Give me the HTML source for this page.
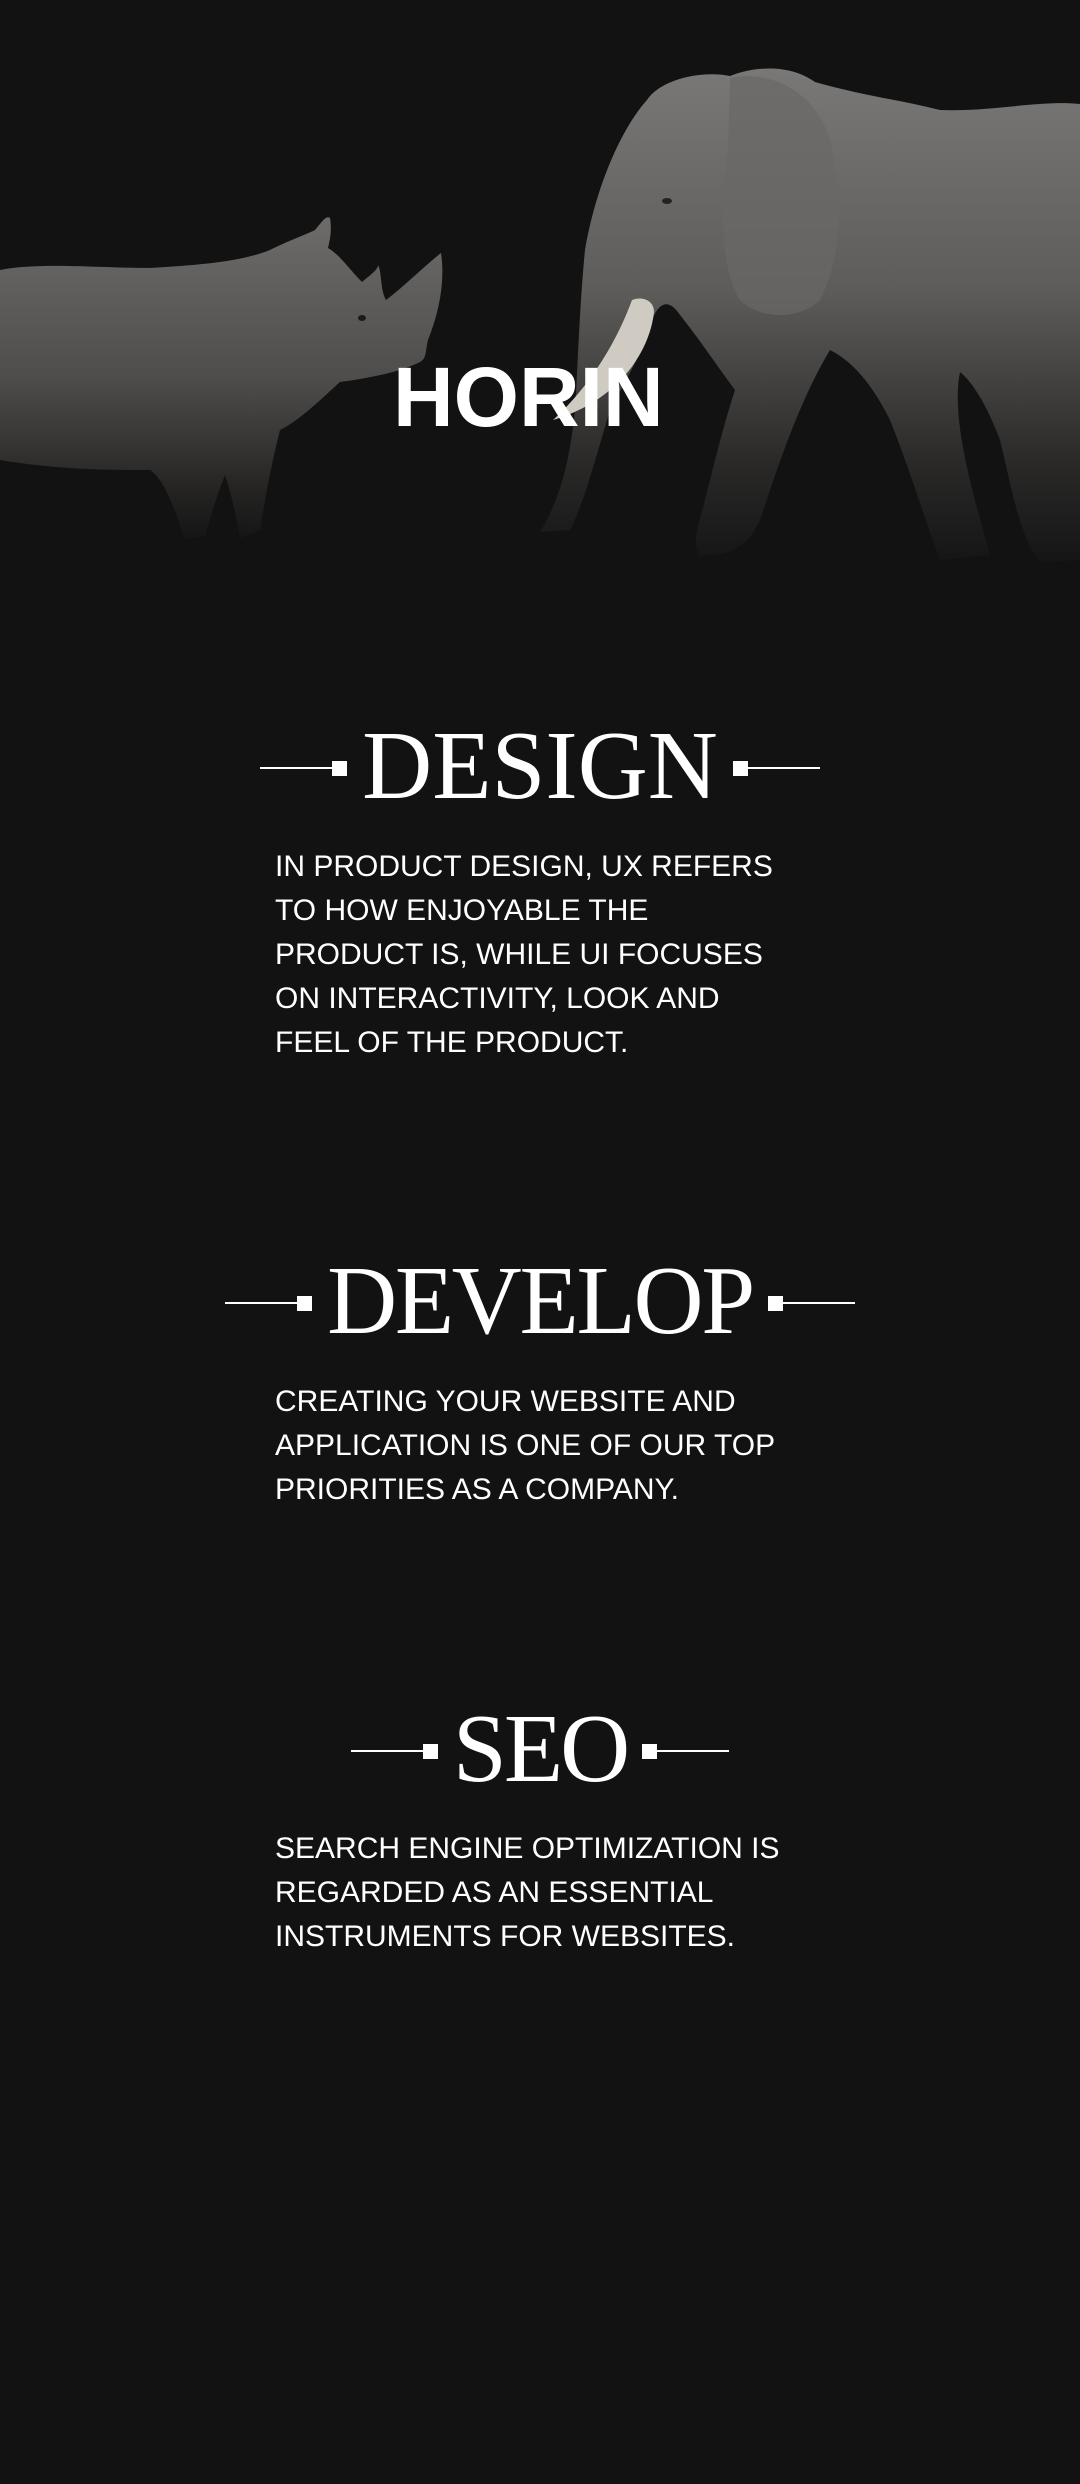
<!DOCTYPE html>
<html><head><meta charset="utf-8">
<style>
html,body{margin:0;padding:0;background:#121212;}
body{width:1080px;height:2484px;position:relative;overflow:hidden;font-family:"Liberation Sans",sans-serif;color:#fff;}
.hero{position:absolute;left:0;top:0;width:1080px;height:620px;}
.logo{position:absolute;left:393px;top:355px;font:700 84px/1 "Liberation Sans",sans-serif;color:#fff;letter-spacing:0px;}
.head{position:absolute;left:0;width:1080px;height:0;}
.row{position:absolute;left:0;width:1080px;top:-60px;height:120px;display:flex;justify-content:center;align-items:center;}
.ln{width:72px;height:2px;background:#fff;}
.sq{width:15px;height:15px;background:#fff;}
.ttl{font:400 97px/120px "Liberation Serif",serif;margin:0 15px;position:relative;top:-2px;white-space:nowrap;}
.txt{position:absolute;left:275px;font:400 30px/44px "Liberation Sans",sans-serif;color:#fff;white-space:nowrap;}
</style></head><body>
<svg class="hero" width="1080" height="620" viewBox="0 0 1080 620">
<defs>
<linearGradient id="ge" x1="0" y1="0" x2="0" y2="1">
<stop offset="0" stop-color="#7a7876"/><stop offset="0.45" stop-color="#5e5c5a"/><stop offset="0.8" stop-color="#2a2928"/><stop offset="1" stop-color="#151515"/>
</linearGradient>
<linearGradient id="gr" x1="0" y1="0" x2="0" y2="1">
<stop offset="0" stop-color="#6e6c6a"/><stop offset="0.5" stop-color="#4f4d4b"/><stop offset="0.85" stop-color="#242322"/><stop offset="1" stop-color="#151515"/>
</linearGradient>
</defs>
<path fill="url(#ge)" d="M647,100 C660,80 700,70 730,76 C755,66 790,64 815,82 C860,95 900,100 940,110 C990,112 1040,100 1080,104 L1080,560 L1040,562 C1020,540 1010,480 1000,440 C985,400 970,380 960,372 C950,420 975,500 990,555 L940,560 C925,520 910,470 890,420 C870,380 850,360 830,350 C800,400 780,460 760,520 C750,540 740,555 700,556 C690,545 700,520 705,500 C715,460 725,420 735,390 C720,370 700,340 680,315 C670,300 660,300 652,320 C640,360 625,380 610,410 C595,460 585,500 570,530 L540,532 C560,500 570,460 575,410 C578,360 580,300 585,250 C595,190 620,130 647,100 Z"/>
<path fill="#6a6866" opacity="0.7" d="M730,78 C770,70 815,90 830,140 C845,210 840,260 820,300 C800,320 760,320 740,300 C720,270 720,200 728,150 Z"/>
<path fill="#cfcbc3" d="M632,300 C642,296 654,300 654,312 C650,350 620,400 553,420 C575,400 610,360 632,300 Z"/>
<ellipse cx="667" cy="201" rx="5" ry="3" fill="#222"/>
<path fill="url(#gr)" d="M0,270 C40,262 100,268 150,268 C200,265 240,262 270,250 C290,240 305,235 315,230 C322,222 326,215 330,218 C332,230 330,240 328,248 C340,255 350,270 362,282 C370,275 378,270 378,265 C382,272 380,290 386,300 C400,290 420,270 441,253 C445,280 440,310 428,340 C425,352 427,358 420,362 C400,372 370,378 340,382 C320,400 300,420 280,430 C270,470 265,500 260,530 L240,538 C235,510 230,490 225,475 C215,500 210,520 205,536 L185,540 C175,510 165,480 150,470 C110,470 60,470 0,460 Z"/>
<ellipse cx="362" cy="318" rx="4" ry="3" fill="#1a1a1a"/>
</svg>
<div class="logo">HORIN</div>

<div class="head" style="top:768px"><div class="row"><div class="ln"></div><div class="sq"></div><div class="ttl">DESIGN</div><div class="sq"></div><div class="ln"></div></div></div>
<div class="txt" style="top:845px">IN PRODUCT DESIGN, UX REFERS<br>TO HOW ENJOYABLE THE<br>PRODUCT IS, WHILE UI FOCUSES<br>ON INTERACTIVITY, LOOK AND<br>FEEL OF THE PRODUCT.</div>

<div class="head" style="top:1303px"><div class="row"><div class="ln"></div><div class="sq"></div><div class="ttl" style="letter-spacing:-2.3px">DEVELOP</div><div class="sq"></div><div class="ln"></div></div></div>
<div class="txt" style="top:1380px">CREATING YOUR WEBSITE AND<br>APPLICATION IS ONE OF OUR TOP<br>PRIORITIES AS A COMPANY.</div>

<div class="head" style="top:1751px"><div class="row"><div class="ln"></div><div class="sq"></div><div class="ttl" style="letter-spacing:-3px">SEO</div><div class="sq"></div><div class="ln"></div></div></div>
<div class="txt" style="top:1827px">SEARCH ENGINE OPTIMIZATION IS<br>REGARDED AS AN ESSENTIAL<br>INSTRUMENTS FOR WEBSITES.</div>
</body></html>
